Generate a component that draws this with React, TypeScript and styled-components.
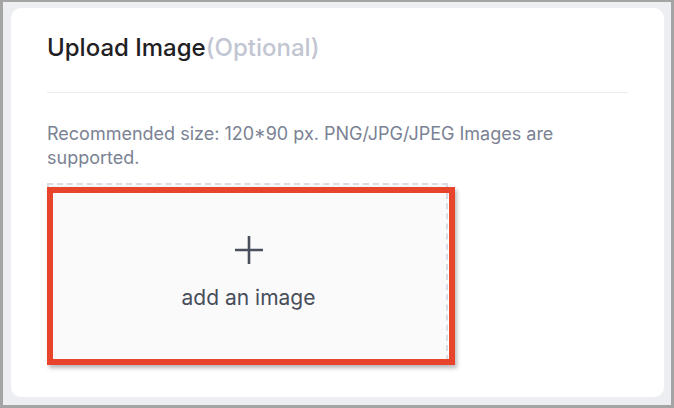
import React from "react";
import styled, { createGlobalStyle } from "styled-components";

const GlobalStyle = createGlobalStyle`
  html, body {
    margin: 0;
    padding: 0;
  }
  body {
    font-family: Inter, "Noto Sans", "Liberation Sans", sans-serif;
    -webkit-font-smoothing: antialiased;
  }
`;

const Frame = styled.div`
  box-sizing: border-box;
  width: 674px;
  height: 408px;
  border: 3px solid #a4a4a4;
  border-top-width: 2px;
  background: #eceef1;
  padding: 6px 7px 8px 8px;
  display: flex;
`;

const Card = styled.section`
  flex: 1;
  background: #ffffff;
  border-radius: 10px;
  padding: 24px 36px 0 36px;
  display: flex;
  flex-direction: column;
`;

const Title = styled.h2`
  margin: 0;
  font-size: 24px;
  line-height: 32px;
  font-weight: 500;
  color: #1f2023;
`;

const Optional = styled.span`
  color: #c2c6d2;
  font-weight: 500;
`;

const Divider = styled.hr`
  margin: 28px 0 0;
  border: none;
  border-top: 1px solid #ececec;
`;

const Hint = styled.p`
  margin: 29px 0 0;
  font-size: 18px;
  line-height: 24px;
  color: #7b8294;
  max-width: 560px;
`;

const DropArea = styled.div`
  position: relative;
  box-sizing: border-box;
  margin-top: 13px;
  width: 401px;
  height: 178px;
  background: #fafafa;
  border: 2px dashed #d6dde5;
  display: flex;
  flex-direction: column;
  align-items: center;
  justify-content: center;
  gap: 20px;
  padding-left: 2px;
  cursor: pointer;
`;

const AddLabel = styled.span`
  font-size: 21px;
  line-height: 25px;
  color: #484d5a;
`;

const Highlight = styled.div`
  position: absolute;
  left: -2px;
  top: 2px;
  width: 408px;
  height: 178px;
  box-sizing: border-box;
  border: 6px solid #e8432b;
  box-shadow: 2px 3px 4px rgba(0, 0, 0, 0.28);
  pointer-events: none;
`;

const PlusIcon = () => (
  <svg width="30" height="30" viewBox="0 0 30 30" aria-hidden>
    <path d="M15 1v28M1 15h28" stroke="#4a4f5d" strokeWidth="2.6" fill="none" />
  </svg>
);

export default function App() {
  return (
    <>
      <GlobalStyle />
      <Frame>
        <Card>
          <Title>
            Upload Image<Optional>(Optional)</Optional>
          </Title>
          <Divider />
          <Hint>
            Recommended size: 120*90 px. PNG/JPG/JPEG Images are supported.
          </Hint>
          <DropArea>
            <PlusIcon />
            <AddLabel>add an image</AddLabel>
            <Highlight />
          </DropArea>
        </Card>
      </Frame>
    </>
  );
}
